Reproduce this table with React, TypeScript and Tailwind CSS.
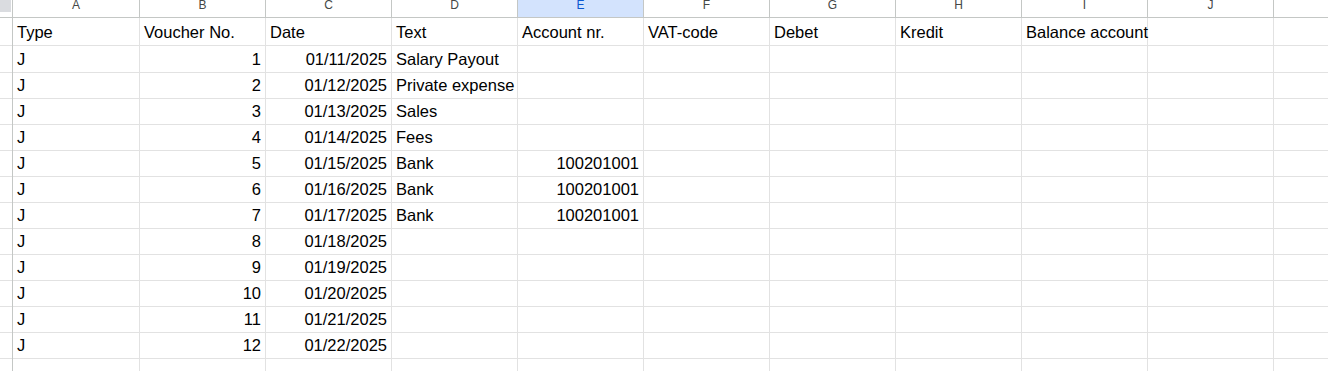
import React from "react";

type Row = {
  type: string;
  voucher: number;
  date: string;
  text?: string;
  account?: string;
};

const columns = ["A", "B", "C", "D", "E", "F", "G", "H", "I", "J"];

const headers = [
  "Type",
  "Voucher No.",
  "Date",
  "Text",
  "Account nr.",
  "VAT-code",
  "Debet",
  "Kredit",
  "Balance account",
  "",
];

const rows: Row[] = [
  { type: "J", voucher: 1, date: "01/11/2025", text: "Salary Payout" },
  { type: "J", voucher: 2, date: "01/12/2025", text: "Private expense" },
  { type: "J", voucher: 3, date: "01/13/2025", text: "Sales" },
  { type: "J", voucher: 4, date: "01/14/2025", text: "Fees" },
  { type: "J", voucher: 5, date: "01/15/2025", text: "Bank", account: "100201001" },
  { type: "J", voucher: 6, date: "01/16/2025", text: "Bank", account: "100201001" },
  { type: "J", voucher: 7, date: "01/17/2025", text: "Bank", account: "100201001" },
  { type: "J", voucher: 8, date: "01/18/2025" },
  { type: "J", voucher: 9, date: "01/19/2025" },
  { type: "J", voucher: 10, date: "01/20/2025" },
  { type: "J", voucher: 11, date: "01/21/2025" },
  { type: "J", voucher: 12, date: "01/22/2025" },
];

const grid = "grid grid-cols-[13px_127px_126px_126px_126px_126px_126px_126px_126px_126px_126px_1fr]";

const Cell: React.FC<{ children?: React.ReactNode; right?: boolean }> = ({ children, right }) => (
  <div
    className={`flex items-center overflow-visible whitespace-nowrap border-r border-b border-[#e2e2e2] px-[4px] pt-[2px] ${
      right ? "justify-end" : "justify-start"
    }`}
  >
    {children}
  </div>
);

export default function App() {
  return (
    <div className="h-[371px] w-[1328px] overflow-hidden bg-white font-['Liberation_Sans',Arial,sans-serif] text-[16.5px] text-black">
      {/* column letters */}
      <div className={`${grid} h-[18px]`}>
        <div className="relative border-r border-b border-[#c4c7c5]">
          <div className="h-[12px] w-[11px] bg-[#dadce0]" />
        </div>
        {columns.map((c) => (
          <div
            key={c}
            className={`flex justify-center border-r border-b border-[#c4c7c5] text-[12px] leading-[12px] ${
              c === "E" ? "bg-[#d3e3fd] text-[#0b57d0]" : "text-[#444746]"
            }`}
          >
            <span className="-mt-[1px]">{c}</span>
          </div>
        ))}
        <div className="border-b border-[#c4c7c5]" />
      </div>

      {/* header row */}
      <div className={`${grid} h-[27px]`}>
        <div className="border-r border-b border-r-[#c4c7c5] border-b-[#e2e2e2]" />
        {headers.map((h, i) => (
          <Cell key={i}>{h}</Cell>
        ))}
        <div className="border-b border-[#e2e2e2]" />
      </div>

      {rows.map((r) => (
        <div key={r.voucher} className={`${grid} h-[26px]`}>
          <div className="border-r border-b border-r-[#c4c7c5] border-b-[#e2e2e2]" />
          <Cell>{r.type}</Cell>
          <Cell right>{r.voucher}</Cell>
          <Cell right>{r.date}</Cell>
          <Cell>{r.text}</Cell>
          <Cell right>{r.account}</Cell>
          <Cell />
          <Cell />
          <Cell />
          <Cell />
          <Cell />
          <div className="border-b border-[#e2e2e2]" />
        </div>
      ))}

      <div className={`${grid} h-[26px]`}>
        <div className="border-r border-r-[#c4c7c5]" />
        {columns.map((c) => (
          <div key={c} className="border-r border-[#e2e2e2]" />
        ))}
        <div />
      </div>
    </div>
  );
}
